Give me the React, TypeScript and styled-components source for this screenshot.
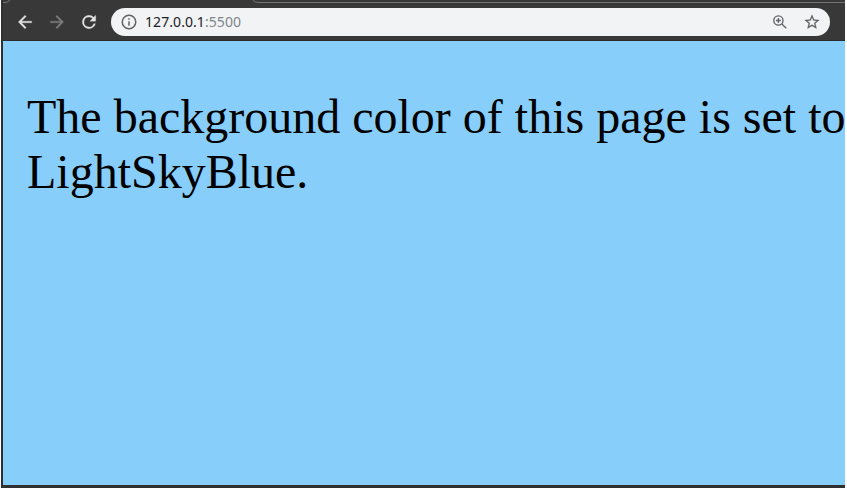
import React from "react";
import styled, { createGlobalStyle } from "styled-components";

const GlobalStyle = createGlobalStyle`
  body { margin: 0; background: #fff; overflow: hidden; }
`;

const Window = styled.div`
  box-sizing: border-box;
  width: 844px;
  height: 488px;
  margin-left: 1px;
  display: flex;
  flex-direction: column;
  border-left: 2px solid #303030;
  border-bottom: 3px solid #303030;
  background: #383838;
`;

const TabStrip = styled.div`
  height: 3px;
  display: flex;
  justify-content: space-between;
`;

const TabEdge = styled.svg`
  display: block;
  height: 3px;
  fill: none;
  stroke: #747474;
`;

const Toolbar = styled.div`
  box-sizing: border-box;
  height: 38px;
  display: flex;
  align-items: center;
  padding: 0 15px 0 12px;
  border-bottom: 1px solid #292b2d;
`;

const NavButton = styled.button<{ $muted?: boolean }>`
  width: 20px;
  height: 20px;
  margin-right: 12px;
  padding: 0;
  border: 0;
  background: none;
  color: ${(p) => (p.$muted ? "#7c7c7c" : "#e4e4e4")};
`;

const Glyph = styled.svg<{ $weight?: number }>`
  display: block;
  flex: none;
  fill: currentColor;
  stroke: currentColor;
  stroke-width: ${(p) => p.$weight ?? 0};
`;

const LineGlyph = styled(Glyph)`
  fill: none;
`;

const AddressBar = styled.div`
  box-sizing: border-box;
  flex: 1;
  height: 28px;
  display: flex;
  align-items: center;
  padding: 0 9px 0 9px;
  border-radius: 14px;
  background: #f1f3f4;
  color: #5f6368;
`;

const Address = styled.span`
  flex: 1;
  margin-left: 7px;
  font: 14px/20px "Noto Sans", sans-serif;
  letter-spacing: 0.07px;
  color: #202124;
`;

const Port = styled.span`
  color: #80868b;
`;

const Actions = styled.div`
  display: flex;
  gap: 14px;
`;

const Page = styled.main`
  flex: 1;
  padding: 48px 0 0 24px;
  background: #87cefa;
  overflow: hidden;
`;

const Message = styled.p`
  width: 830px;
  margin: 0;
  font: 48px/55px "Liberation Serif", serif;
  color: #000;
`;

export default function App() {
  return (
    <>
      <GlobalStyle />
      <Window>
        <TabStrip>
          <TabEdge width="8" viewBox="0 0 8 3"><path d="M0 2.5H2Q5 2.5 7 0" /></TabEdge>
          <TabEdge width="593" viewBox="0 0 593 3"><path d="M1 0Q2 2.5 6 2.5H593" /></TabEdge>
        </TabStrip>
        <Toolbar>
          <NavButton aria-label="Back">
            <Glyph $weight={0.35} width="20" height="20" viewBox="0 0 24 24"><path d="M20 11H7.83l5.59-5.59L12 4l-8 8 8 8 1.41-1.41L7.83 13H20z" /></Glyph>
          </NavButton>
          <NavButton $muted aria-label="Forward">
            <Glyph $weight={0.35} width="20" height="20" viewBox="0 0 24 24"><path d="M12 4l-1.41 1.41L16.17 11H4v2h12.17l-5.58 5.59L12 20l8-8z" /></Glyph>
          </NavButton>
          <NavButton aria-label="Reload">
            <Glyph $weight={0.35} width="20" height="20" viewBox="0 0 24 24"><path d="M17.65 6.35A7.96 7.96 0 0 0 12 4a8 8 0 1 0 7.73 10h-2.08A6 6 0 1 1 12 6c1.66 0 3.14.69 4.22 1.78L13 11h7V4z" /></Glyph>
          </NavButton>
          <AddressBar>
            <Glyph width="18" height="18" viewBox="0 0 24 24"><path d="M11 17h2v-6h-2zm1-15a10 10 0 1 0 0 20 10 10 0 0 0 0-20zm0 18a8 8 0 1 1 0-16 8 8 0 0 1 0 16zM11 9h2V7h-2z" /></Glyph>
            <Address>127.0.0.1<Port>:5500</Port></Address>
            <Actions>
              <LineGlyph $weight={1.35} width="18" height="18" viewBox="0 0 18 18"><circle cx="7.4" cy="7.5" r="4.6" /><path d="M10.8 10.9L15.3 15.3M5 7.5H9.8M7.4 5.1V9.9" /></LineGlyph>
              <Glyph $weight={0.2} width="18" height="18" viewBox="0 0 24 24"><path d="M22 9.24l-7.19-.62L12 2 9.19 8.63 2 9.24l5.46 4.73L5.82 21 12 17.27 18.18 21l-1.63-7.03zM12 15.4l-3.76 2.27 1-4.28-3.32-2.88 4.38-.38L12 6.1l1.71 4.04 4.38.38-3.32 2.88 1 4.28z" /></Glyph>
            </Actions>
          </AddressBar>
        </Toolbar>
        <Page>
          <Message>The background color of this page is set to LightSkyBlue.</Message>
        </Page>
      </Window>
    </>
  );
}
